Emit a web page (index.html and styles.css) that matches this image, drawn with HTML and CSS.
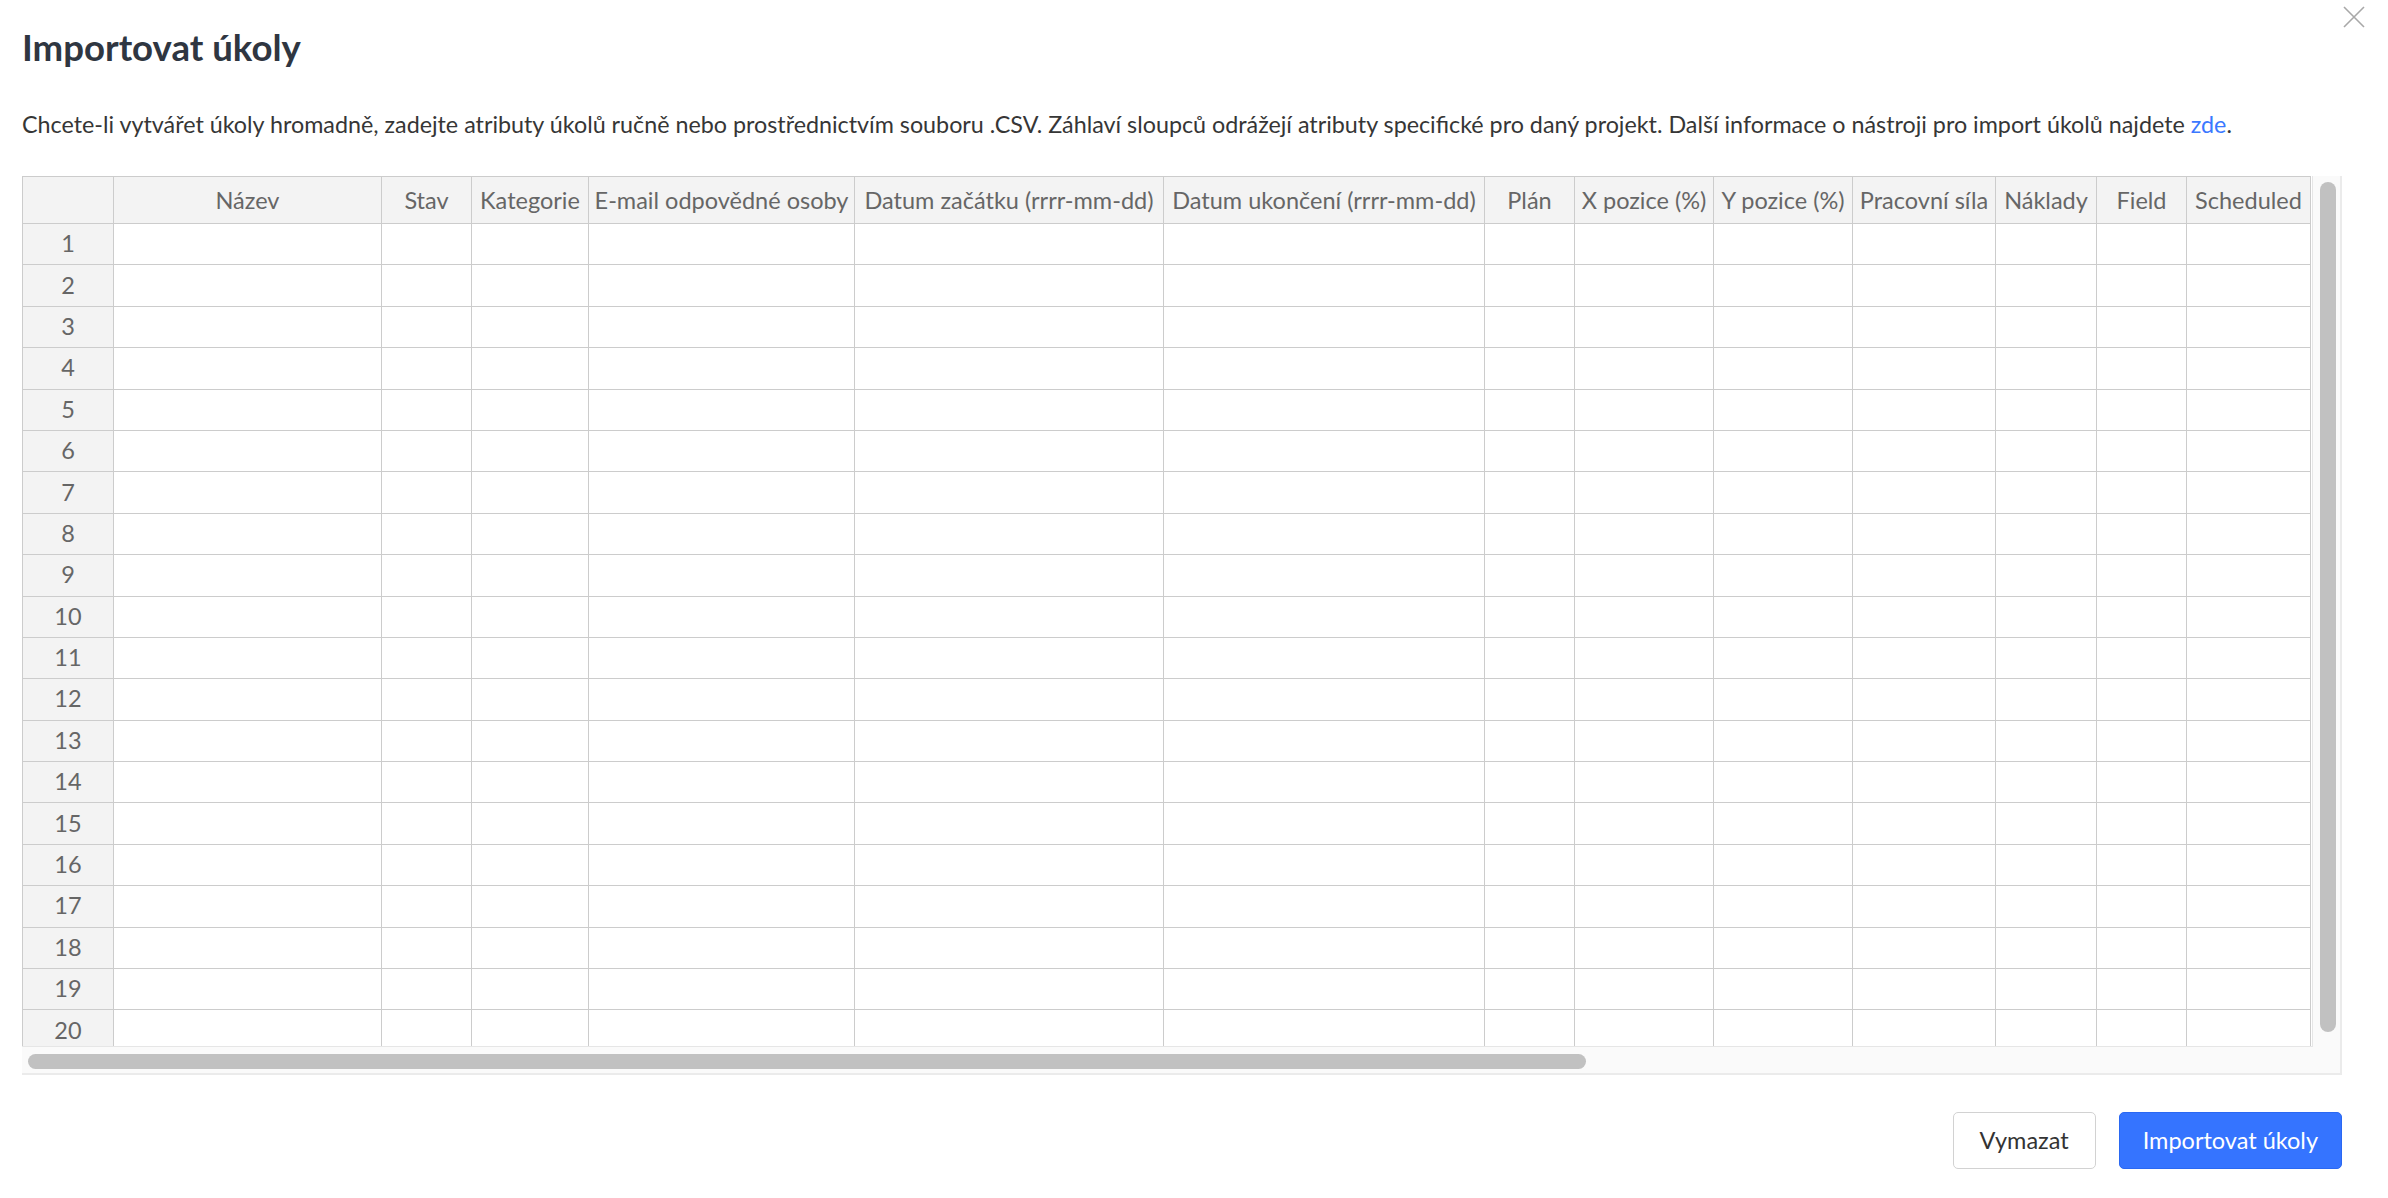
FILE: index.html
```html
<!DOCTYPE html>
<html lang="cs">
<head>
<meta charset="utf-8">
<title>Importovat úkoly</title>
<link rel="stylesheet" href="styles.css">
</head>
<body>
<div class="modal">
  <button class="close" aria-label="Zavřít">
    <svg width="22" height="22" viewBox="0 0 22 22"><path d="M1 1 L21 21 M21 1 L1 21" stroke="#a8a8a8" stroke-width="1.6" fill="none"/></svg>
  </button>
  <h1 class="title">Importovat úkoly</h1>
  <p class="intro">Chcete-li vytvářet úkoly hromadně, zadejte atributy úkolů ručně nebo prostřednictvím souboru .CSV. Záhlaví sloupců odrážejí atributy specifické pro daný projekt. Další informace o nástroji pro import úkolů najdete <a href="#" class="link">zde</a>.</p>
  <div class="sheet">
    <div class="viewport">
      <table class="grid">
        <thead>
          <tr>
            <th class="c0"></th>
            <th class="c1">Název</th>
            <th class="c2">Stav</th>
            <th class="c3">Kategorie</th>
            <th class="c4">E-mail odpovědné osoby</th>
            <th class="c5">Datum začátku (rrrr-mm-dd)</th>
            <th class="c6">Datum ukončení (rrrr-mm-dd)</th>
            <th class="c7">Plán</th>
            <th class="c8">X pozice (%)</th>
            <th class="c9">Y pozice (%)</th>
            <th class="c10">Pracovní síla</th>
            <th class="c11">Náklady</th>
            <th class="c12">Field</th>
            <th class="c13">Scheduled</th>
          </tr>
        </thead>
        <tbody>
          <tr><th>1</th><td></td><td></td><td></td><td></td><td></td><td></td><td></td><td></td><td></td><td></td><td></td><td></td><td></td></tr>
          <tr><th>2</th><td></td><td></td><td></td><td></td><td></td><td></td><td></td><td></td><td></td><td></td><td></td><td></td><td></td></tr>
          <tr><th>3</th><td></td><td></td><td></td><td></td><td></td><td></td><td></td><td></td><td></td><td></td><td></td><td></td><td></td></tr>
          <tr><th>4</th><td></td><td></td><td></td><td></td><td></td><td></td><td></td><td></td><td></td><td></td><td></td><td></td><td></td></tr>
          <tr><th>5</th><td></td><td></td><td></td><td></td><td></td><td></td><td></td><td></td><td></td><td></td><td></td><td></td><td></td></tr>
          <tr><th>6</th><td></td><td></td><td></td><td></td><td></td><td></td><td></td><td></td><td></td><td></td><td></td><td></td><td></td></tr>
          <tr><th>7</th><td></td><td></td><td></td><td></td><td></td><td></td><td></td><td></td><td></td><td></td><td></td><td></td><td></td></tr>
          <tr><th>8</th><td></td><td></td><td></td><td></td><td></td><td></td><td></td><td></td><td></td><td></td><td></td><td></td><td></td></tr>
          <tr><th>9</th><td></td><td></td><td></td><td></td><td></td><td></td><td></td><td></td><td></td><td></td><td></td><td></td><td></td></tr>
          <tr><th>10</th><td></td><td></td><td></td><td></td><td></td><td></td><td></td><td></td><td></td><td></td><td></td><td></td><td></td></tr>
          <tr><th>11</th><td></td><td></td><td></td><td></td><td></td><td></td><td></td><td></td><td></td><td></td><td></td><td></td><td></td></tr>
          <tr><th>12</th><td></td><td></td><td></td><td></td><td></td><td></td><td></td><td></td><td></td><td></td><td></td><td></td><td></td></tr>
          <tr><th>13</th><td></td><td></td><td></td><td></td><td></td><td></td><td></td><td></td><td></td><td></td><td></td><td></td><td></td></tr>
          <tr><th>14</th><td></td><td></td><td></td><td></td><td></td><td></td><td></td><td></td><td></td><td></td><td></td><td></td><td></td></tr>
          <tr><th>15</th><td></td><td></td><td></td><td></td><td></td><td></td><td></td><td></td><td></td><td></td><td></td><td></td><td></td></tr>
          <tr><th>16</th><td></td><td></td><td></td><td></td><td></td><td></td><td></td><td></td><td></td><td></td><td></td><td></td><td></td></tr>
          <tr><th>17</th><td></td><td></td><td></td><td></td><td></td><td></td><td></td><td></td><td></td><td></td><td></td><td></td><td></td></tr>
          <tr><th>18</th><td></td><td></td><td></td><td></td><td></td><td></td><td></td><td></td><td></td><td></td><td></td><td></td><td></td></tr>
          <tr><th>19</th><td></td><td></td><td></td><td></td><td></td><td></td><td></td><td></td><td></td><td></td><td></td><td></td><td></td></tr>
          <tr><th>20</th><td></td><td></td><td></td><td></td><td></td><td></td><td></td><td></td><td></td><td></td><td></td><td></td><td></td></tr>
        </tbody>
      </table>
    </div>
    <div class="vtrack"><div class="vthumb"></div></div>
    <div class="htrack"><div class="hthumb"></div></div>
  </div>
  <div class="actions">
    <button class="btn btn-secondary">Vymazat</button>
    <button class="btn btn-primary">Importovat úkoly</button>
  </div>
</div>
</body>
</html>
```

FILE: styles.css
```css
* { box-sizing: border-box; }

html, body {
  margin: 0;
  padding: 0;
  background: #ffffff;
}

body {
  font-family: Lato, "Open Sans", "Liberation Sans", sans-serif;
  color: #3a3a3a;
  width: 2388px;
  height: 1198px;
  overflow: hidden;
}

.modal {
  position: relative;
  padding: 26px 46px 0 22px;
}

.close {
  position: absolute;
  top: 6px;
  right: 23px;
  width: 22px;
  height: 22px;
  padding: 0;
  border: 0;
  background: transparent;
  display: flex;
}

.title {
  margin: 0 0 37px 0;
  font-size: 36.6px;
  line-height: 43px;
  font-weight: 700;
  color: #2f3641;
}

.intro {
  margin: 0 0 34px 0;
  font-size: 23.3px;
  line-height: 36px;
  color: #363636;
  white-space: nowrap;
}

.link {
  color: #3b78ff;
  text-decoration: none;
}

.sheet {
  display: grid;
  grid-template-columns: 2291px 27px;
  grid-template-rows: 871px 26px;
  width: 2320px;
  border-right: 2px solid #ebebeb;
  border-bottom: 2px solid #ebebeb;
}

.viewport {
  grid-column: 1;
  grid-row: 1;
  overflow: hidden;
  border-right: 1px solid #e6e6e6;
  border-bottom: 1px solid #e6e6e6;
}

.grid {
  table-layout: fixed;
  border-collapse: separate;
  border-spacing: 0;
  width: 2289px;
  font-size: 23.5px;
  color: #666666;
}

.grid th,
.grid td {
  padding: 0 3px;
  border-right: 1px solid #cccccc;
  border-bottom: 1px solid #cccccc;
  background: #ffffff;
  font-weight: 400;
  text-align: center;
  vertical-align: middle;
  white-space: nowrap;
  overflow: hidden;
}

.grid thead th {
  height: 48px;
  border-top: 1px solid #cccccc;
  background: #f3f3f3;
}

.grid tbody tr {
  height: 41.4px;
}

.grid tbody th {
  background: #f3f3f3;
  padding-bottom: 2px;
}

.grid th:first-child {
  border-left: 1px solid #cccccc;
}

.c0 { width: 92px; }
.c1 { width: 268px; }
.c2 { width: 90px; }
.c3 { width: 117px; }
.c4 { width: 266px; }
.c5 { width: 309px; }
.c6 { width: 321px; }
.c7 { width: 90px; }
.c8 { width: 139px; }
.c9 { width: 139px; }
.c10 { width: 143px; }
.c11 { width: 101px; }
.c12 { width: 90px; }
.c13 { width: 124px; }

.vtrack {
  grid-column: 2;
  grid-row: 1 / 3;
  background: #fafafa;
  padding: 6px 4px 0 7px;
}

.vthumb {
  width: 16px;
  height: 850px;
  border-radius: 8px;
  background: #c1c1c1;
}

.htrack {
  grid-column: 1;
  grid-row: 2;
  background: #fafafa;
  padding: 7px 0 0 6px;
}

.hthumb {
  width: 1558px;
  height: 15px;
  border-radius: 8px;
  background: #c1c1c1;
}

.actions {
  display: flex;
  justify-content: flex-end;
  gap: 23px;
  margin-top: 37px;
  width: 2320px;
}

.btn {
  height: 57px;
  border-radius: 5px;
  font-family: Lato, "Open Sans", "Liberation Sans", sans-serif;
  font-size: 23.5px;
  line-height: 1;
  cursor: pointer;
}

.btn-secondary {
  padding: 0 26px;
  background: #ffffff;
  border: 1px solid #d2d2d2;
  color: #333333;
}

.btn-primary {
  padding: 0 23px;
  background: #3574ff;
  border: 1px solid #2a68f2;
  color: #ffffff;
}
```
